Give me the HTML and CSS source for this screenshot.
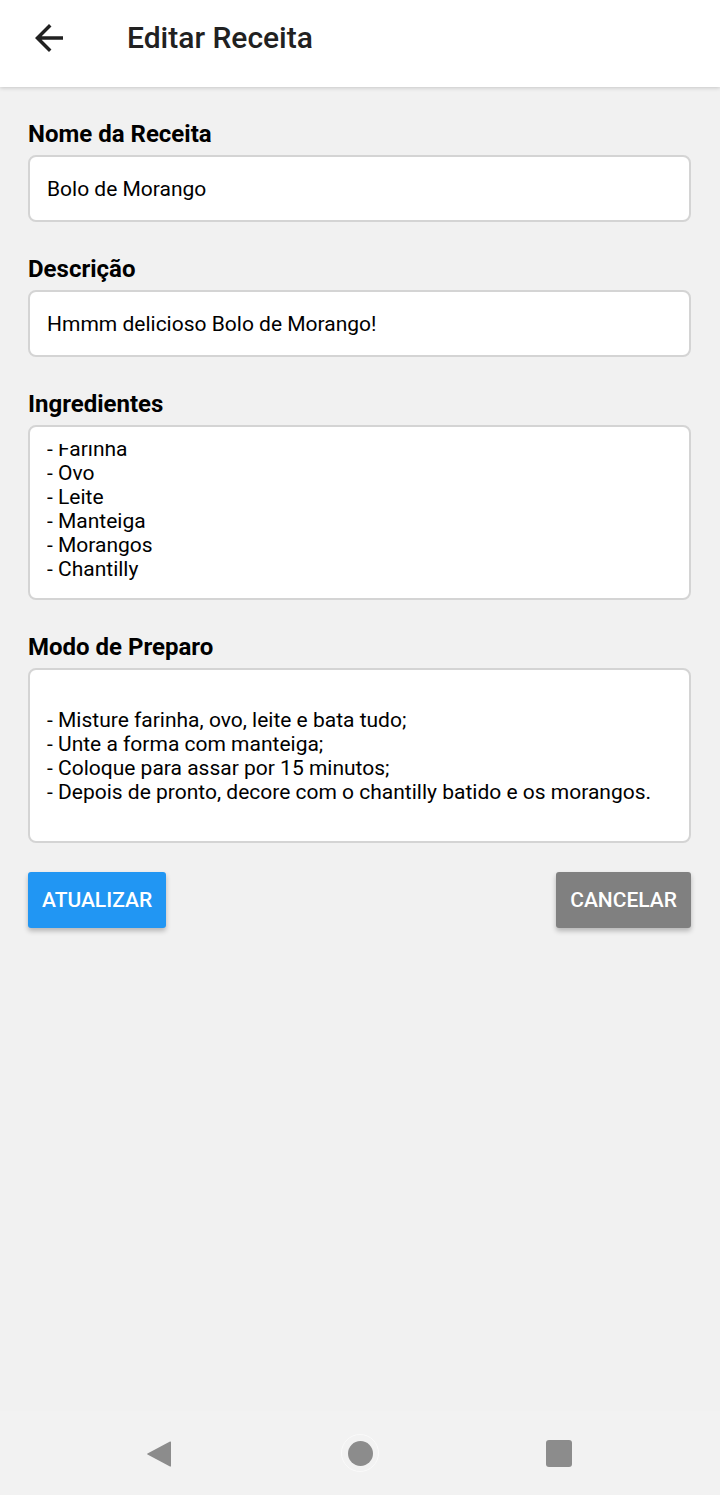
FILE: index.html
```html
<!DOCTYPE html>
<html lang="pt">
<head>
<meta charset="utf-8">
<title>Editar Receita</title>
<link rel="stylesheet" href="styles.css">
</head>
<body>
<div class="screen">
  <header class="toolbar">
    <button class="back" aria-label="Voltar">
      <svg viewBox="0 0 24 24" width="42" height="42"><path d="M20 11H7.83l5.59-5.59L12 4l-8 8 8 8 1.41-1.41L7.83 13H20v-2z" fill="#212121"/></svg>
    </button>
    <h1 class="title">Editar Receita</h1>
  </header>

  <main class="form">
    <label class="label">Nome da Receita</label>
    <div class="input single">Bolo de Morango</div>

    <label class="label">Descrição</label>
    <div class="input single">Hmmm delicioso Bolo de Morango!</div>

    <label class="label">Ingredientes</label>
    <div class="input multi">
      <div class="clip">
        <div class="scrolled">- Farinha<br>- Ovo<br>- Leite<br>- Manteiga<br>- Morangos<br>- Chantilly</div>
      </div>
    </div>

    <label class="label">Modo de Preparo</label>
    <div class="input multi centered">
      <div class="lines">- Misture farinha, ovo, leite e bata tudo;<br>- Unte a forma com manteiga;<br>- Coloque para assar por 15 minutos;<br>- Depois de pronto, decore com o chantilly batido e os morangos.</div>
    </div>

    <div class="actions">
      <button class="btn primary">ATUALIZAR</button>
      <button class="btn secondary">CANCELAR</button>
    </div>
  </main>

  <nav class="navbar">
    <svg class="nav-back" viewBox="0 0 26 28" width="26" height="28"><path d="M24 1.5 Q25 1 25 2.5 V25.5 Q25 27 24 26.5 L1.5 14.5 Q0.5 14 1.5 13.5 Z" fill="#8c8c8c"/></svg>
    <span class="nav-home"><span class="dot"></span></span>
    <span class="nav-recent"></span>
  </nav>
</div>
</body>
</html>
```
FILE: styles.css
```css
* { box-sizing: border-box; }
html, body { margin: 0; padding: 0; }
body {
  background: #f1f1f1;
  font-family: Roboto, "Noto Sans", "Liberation Sans", sans-serif;
  color: #000;
}
.screen {
  width: 720px;
  height: 1495px;
  display: flex;
  flex-direction: column;
}
.toolbar {
  height: 87px;
  background: #fff;
  display: flex;
  align-items: center;
  padding-bottom: 11px;
  box-shadow: 0 1px 4px rgba(0,0,0,0.18);
  position: relative;
  z-index: 1;
  flex: none;
}
.back {
  background: none;
  border: 0;
  padding: 0;
  margin: 0 0 0 28px;
  width: 42px;
  height: 42px;
  display: flex;
}
.title {
  margin: 0 0 0 57px;
  font-size: 30px;
  font-weight: 500;
  color: #212121;
  line-height: 36px;
}
.form {
  flex: 1;
  padding: 31px 29px 0 28px;
  display: flex;
  flex-direction: column;
}
.label {
  display: block;
  font-size: 24px;
  font-weight: 700;
  line-height: 28px;
  padding-top: 2px;
  margin-bottom: 7px;
}
.input {
  background: #fff;
  border: 2px solid #d4d4d4;
  border-radius: 8px;
  font-size: 21px;
  margin-bottom: 31px;
}
.single {
  height: 67px;
  display: flex;
  align-items: center;
  padding: 0 17px;
}
.multi {
  height: 175px;
  padding: 17px 17px;
  font-size: 21px;
  line-height: 24px;
}
.clip {
  height: 139px;
  overflow: hidden;
}
.scrolled {
  margin-top: -7px;
}
.centered {
  display: flex;
  align-items: center;
  padding-top: 0;
  padding-bottom: 0;
  margin-bottom: 29px;
}
.actions {
  display: flex;
  justify-content: space-between;
}
.btn {
  height: 56px;
  border: 0;
  border-radius: 3px;
  padding: 0 14px;
  color: #fff;
  font-family: Roboto, "Noto Sans", "Liberation Sans", sans-serif;
  font-size: 21px;
  font-weight: 500;
  box-shadow: 0 3px 5px rgba(0,0,0,0.25);
}
.primary { background: #2196f3; }
.secondary { background: #808080; }
.navbar {
  flex: none;
  height: 84px;
  background: #f2f2f2;
  display: flex;
  align-items: center;
  position: relative;
}
.nav-back {
  margin-left: 146px;
  margin-top: 1px;
}
.nav-home {
  margin-left: 169px;
  width: 38px;
  height: 38px;
  border-radius: 50%;
  border: 1.5px solid #fafafa;
  display: flex;
  align-items: center;
  justify-content: center;
}
.dot {
  width: 25px;
  height: 25px;
  border-radius: 50%;
  background: #8c8c8c;
}
.nav-recent {
  margin-left: 167px;
  width: 26px;
  height: 27px;
  border-radius: 3px;
  background: #8c8c8c;
}
```
